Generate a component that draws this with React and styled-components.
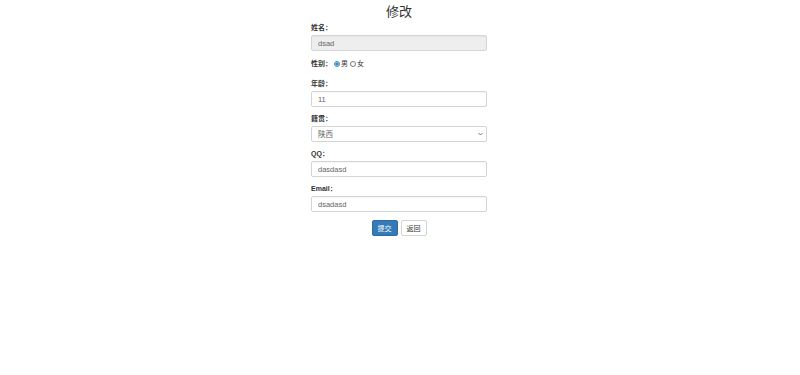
import React from "react";
import styled, { createGlobalStyle } from "styled-components";

const GlobalStyle = createGlobalStyle`
  body {
    margin: 0;
    background: #fff;
    font-family: "Liberation Sans", "Noto Sans CJK SC", Arial, sans-serif;
    color: #333;
  }
`;

const Page = styled.div`
  display: flex;
  justify-content: center;
  padding: 4px 2px 0 0;
`;

const Form = styled.form`
  width: 176px;
  display: flex;
  flex-direction: column;
`;

const Title = styled.h3`
  margin: 0 0 3px;
  text-align: center;
  font-size: 13px;
  font-weight: 400;
  line-height: 16px;
  color: #333;
`;

const Group = styled.div`
  margin-bottom: 7px;
`;

const Label = styled.label`
  display: block;
  font-size: 7px;
  font-weight: bold;
  line-height: 10px;
  margin-bottom: 2px;
`;

const Input = styled.input`
  box-sizing: border-box;
  display: block;
  width: 100%;
  height: 16px;
  padding: 0 6px;
  font-family: inherit;
  font-size: 7.5px;
  color: #666;
  background: ${p => (p.disabled ? "#eee" : "#fff")};
  border: 1px solid #d4d4d4;
  border-radius: 2px;
  box-shadow: inset 0 1px 1px rgba(0, 0, 0, 0.04);
  outline: none;
`;

const SelectWrap = styled.div`
  position: relative;
`;

const Select = styled.select`
  box-sizing: border-box;
  display: block;
  width: 100%;
  height: 16px;
  padding: 0 6px;
  font-family: inherit;
  font-size: 7.5px;
  color: #666;
  background: #fff;
  border: 1px solid #d4d4d4;
  border-radius: 2px;
  appearance: none;
  outline: none;
`;

const Chevron = styled.svg`
  position: absolute;
  right: 4px;
  top: 6px;
  width: 5px;
  height: 4px;
  pointer-events: none;
`;

const RadioRow = styled.div`
  display: flex;
  align-items: center;
  font-size: 7px;
  line-height: 10px;
  margin: 1px 0 10px;
`;

const RadioLabel = styled.span`
  font-weight: bold;
  margin-right: 2px;
`;

const Radio = styled.input`
  width: 6px;
  height: 6px;
  margin: 0 1px 0 ${p => (p.$gap ? "2px" : "0")};
  accent-color: #3a8fc4;
`;

const Buttons = styled.div`
  display: flex;
  justify-content: center;
  gap: 3px;
  margin-top: 1px;
`;

const Button = styled.button`
  box-sizing: border-box;
  height: 16px;
  padding: 0 5px;
  font-family: inherit;
  font-size: 7px;
  border-radius: 2px;
  border: 1px solid ${p => (p.$primary ? "#2e6da4" : "#d4d4d4")};
  background: ${p => (p.$primary ? "#337ab7" : "#fff")};
  color: ${p => (p.$primary ? "#fff" : "#333")};
`;

export default function App() {
  return (
    <>
      <GlobalStyle />
      <Page>
        <Form onSubmit={e => e.preventDefault()}>
          <Title>修改</Title>
          <Group>
            <Label>姓名：</Label>
            <Input disabled defaultValue="dsad" />
          </Group>
          <RadioRow>
            <RadioLabel>性别：</RadioLabel>
            <Radio type="radio" name="sex" defaultChecked />男
            <Radio type="radio" name="sex" $gap />女
          </RadioRow>
          <Group>
            <Label>年龄：</Label>
            <Input defaultValue="11" />
          </Group>
          <Group>
            <Label>籍贯：</Label>
            <SelectWrap>
              <Select defaultValue="陕西">
                <option>陕西</option>
                <option>北京</option>
                <option>上海</option>
              </Select>
              <Chevron viewBox="0 0 10 8">
                <path d="M1 2 L5 6 L9 2" fill="none" stroke="#555" strokeWidth="1.6" />
              </Chevron>
            </SelectWrap>
          </Group>
          <Group>
            <Label>QQ：</Label>
            <Input defaultValue="dasdasd" />
          </Group>
          <Group>
            <Label>Email：</Label>
            <Input defaultValue="dsadasd" />
          </Group>
          <Buttons>
            <Button $primary type="submit">提交</Button>
            <Button type="button">返回</Button>
          </Buttons>
        </Form>
      </Page>
    </>
  );
}
